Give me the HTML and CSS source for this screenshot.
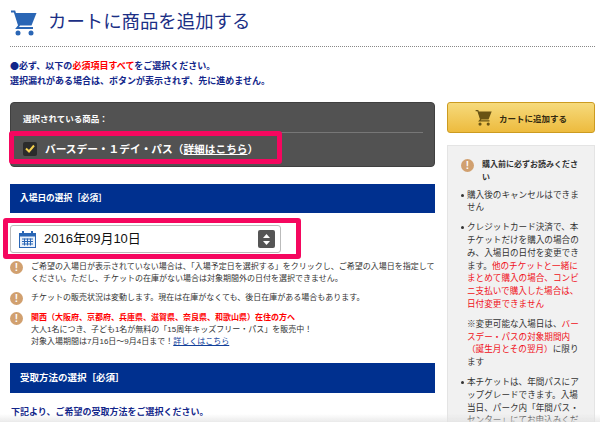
FILE: index.html
```html
<!DOCTYPE html>
<html lang="ja">
<head>
    <meta charset="UTF-8">
    <meta name="viewport" content="width=device-width, initial-scale=1.0">
    <title>カートに商品を追加する</title>
    <link rel="stylesheet" href="styles.css">
</head>
<body>
    <header class="page-head">
        <svg class="cart-icon" width="27" height="27" viewBox="0 0 27 27">
            <path d="M5 4H26.500L21.500 16.500H8.500z" fill="#2a66b5"/>
            <path d="M1 2.500H4.500L9 16.500L7 19H23" fill="none" stroke="#2a66b5" stroke-width="1.800"/>
            <circle cx="8" cy="24" r="2.500" fill="#2a66b5"/>
            <circle cx="21" cy="24" r="2.500" fill="#2a66b5"/>
        </svg>
        <h1>カートに商品を追加する</h1>
    </header>

    <p class="lead">●必ず、以下の<em>必須項目すべて</em>をご選択ください。<br>選択漏れがある場合は、ボタンが表示されず、先に進めません。</p>

    <div class="columns">
        <main class="main-col">
            <section class="selected-panel">
                <div class="selected-label">選択されている商品：</div>
                <div class="selected-item">
                    <span class="check">
                        <svg width="10" height="9" viewBox="0 0 10 9"><path d="M1 4.500l3 3 5-6" fill="none" stroke="#f2cf4e" stroke-width="2"/></svg>
                    </span>
                    <span>バースデー・１デイ・パス（<u>詳細はこちら</u>）</span>
                </div>
            </section>

            <h2 class="bar">入場日の選択［必須］</h2>

            <div class="date-frame">
                <div class="date-select">
                    <svg class="cal-icon" width="17" height="17" viewBox="0 0 17 17">
                        <rect x="0.500" y="2.500" width="16" height="14" fill="#eaf1fa" stroke="#2a66b5"/>
                        <rect x="0.500" y="2.500" width="16" height="3" fill="#2a66b5"/>
                        <rect x="3" y="0" width="2" height="4" fill="#2a66b5"/>
                        <rect x="12" y="0" width="2" height="4" fill="#2a66b5"/>
                        <path d="M3 8h11M3 10.500h11M3 13h11M5.500 7.500v7M8.500 7.500v7M11.500 7.500v7" stroke="#2a66b5" fill="none"/>
                    </svg>
                    <span class="date-text">2016年09月10日</span>
                    <span class="stepper">
                        <svg width="7" height="11" viewBox="0 0 7 11"><path d="M3.500 0L7 4H0zM3.500 11L0 7h7z" fill="#fff"/></svg>
                    </span>
                </div>
            </div>

            <div class="note">
                <span class="alert">!</span>
                <p>ご希望の入場日が表示されていない場合は、「入場予定日を選択する」をクリックし、ご希望の入場日を指定してください。ただし、チケットの在庫がない場合は対象期間外の日付を選択できません。</p>
            </div>
            <div class="note">
                <span class="alert">!</span>
                <p>チケットの販売状況は変動します。現在は在庫がなくても、後日在庫がある場合もあります。</p>
            </div>
            <div class="note">
                <span class="alert">!</span>
                <p><strong>関西（大阪府、京都府、兵庫県、滋賀県、奈良県、和歌山県）在住の方へ</strong><br>大人1名につき、子ども1名が無料の「15周年キッズフリー・パス」を販売中！<br>対象入場期間は7月16日〜9月4日まで！<a href="#">詳しくはこちら</a></p>
            </div>

            <h2 class="bar bar-second">受取方法の選択［必須］</h2>
            <p class="receive">下記より、ご希望の受取方法をご選択ください。</p>
        </main>

        <aside class="side-col">
            <button class="cart-button">
                <svg width="17" height="17" viewBox="0 0 27 27">
                    <path d="M5 4H26.500L21.500 16.500H8.500z" fill="#6a5414"/>
                    <path d="M1 2.500H4.500L9 16.500L7 19H23" fill="none" stroke="#6a5414" stroke-width="2"/>
                    <circle cx="8" cy="24" r="2.500" fill="#6a5414"/>
                    <circle cx="21" cy="24" r="2.500" fill="#6a5414"/>
                </svg>
                <span>カートに追加する</span>
            </button>
            <div class="side-box">
                <div class="side-head">
                    <span class="alert alert-big">!</span>
                    <strong>購入前に必ずお読みください</strong>
                </div>
                <ul>
                    <li>購入後のキャンセルはできません</li>
                    <li>クレジットカード決済で、本チケットだけを購入の場合のみ、入場日の日付を変更できます。<em>他のチケットと一緒にまとめて購入の場合、コンビニ支払いで購入した場合は、日付変更できません</em>
                        <p>※変更可能な入場日は、<em>バースデー・パスの対象期間内（誕生月とその翌月）</em>に限ります</p>
                    </li>
                    <li>本チケットは、年間パスにアップグレードできます。入場当日、パーク内「年間パス・センター」にてお申込みください</li>
                </ul>
            </div>
        </aside>
    </div>
    <div class="bottom-fade"></div>
</body>
</html>
```

FILE: styles.css
```css
* {
    box-sizing: border-box;
}

html, body {
    height: 422px;
    overflow: hidden;
}

body {
    margin: 0;
    padding: 0 5px 0 10px;
    background-color: #fff;
    color: #333;
    font-family: "Liberation Sans", "Noto Sans CJK JP", sans-serif;
    font-size: 8px;
    line-height: 12px;
}

em {
    font-style: normal;
    color: #f01020;
}

.page-head {
    display: flex;
    align-items: center;
    gap: 11px;
    height: 47px;
    padding-bottom: 2px;
    border-bottom: 1px dotted #888;
}

.cart-icon {
    flex: none;
}

h1 {
    margin: 0;
    color: #1b2f85;
    font-size: 18.400px;
    font-weight: normal;
}

.lead {
    margin: 11px 0 14px;
    color: #12268a;
    font-family: "Noto Sans CJK JP", sans-serif;
    font-size: 9px;
    font-weight: bold;
    line-height: 15px;
}

.lead em {
    color: #f00;
}

.columns {
    display: flex;
    gap: 12px;
    align-items: flex-start;
}

.main-col {
    flex: none;
    width: 425px;
}

.side-col {
    flex: none;
    width: 148px;
}

.selected-panel {
    height: 65px;
    padding-top: 10px;
    background-color: #525252;
    border: 1px solid #404040;
    border-radius: 4px;
    color: #fff;
}

.selected-label {
    height: 20px;
    margin: 0 11px 0 12px;
    border-bottom: 1px solid #777;
    font-size: 8.500px;
    font-weight: bold;
}

.selected-item {
    display: flex;
    align-items: center;
    gap: 8px;
    width: 273px;
    height: 33px;
    margin: -2px 0 0 -2px;
    padding: 2px 0 0 9px;
    border: 5px solid #f5075f;
    border-radius: 3px;
    font-size: 10.700px;
    font-weight: bold;
}

.check {
    display: flex;
    align-items: center;
    justify-content: center;
    width: 14px;
    height: 14px;
    background-color: #2b2b2b;
    border-radius: 2px;
}

.bar {
    height: 29px;
    margin: 17px 0 0;
    padding: 0 10px;
    background-color: #00308f;
    color: #fff;
    font-size: 8.700px;
    line-height: 29px;
}

.bar-second {
    height: 30px;
    margin-top: 15px;
    font-size: 9.500px;
    line-height: 30px;
}

.date-frame {
    width: 298px;
    height: 41px;
    margin: 5px 0 2px -7px;
    padding: 2px 15px 1px 2px;
    border: 5px solid #f5075f;
    border-radius: 3px;
}

.date-select {
    display: flex;
    align-items: center;
    height: 28px;
    padding: 0 5px 0 8px;
    background-color: #fff;
    border: 1px solid #bbb;
    border-radius: 3px;
}

.cal-icon {
    flex: none;
}

.date-text {
    margin-left: 8px;
    flex: 1;
    color: #111;
    font-size: 13px;
}

.stepper {
    display: flex;
    align-items: center;
    justify-content: center;
    width: 17px;
    height: 18px;
    background-color: #555;
    border-radius: 2px;
}

.note {
    display: flex;
    gap: 8px;
    margin-bottom: 7px;
}

.note p {
    margin: 0;
    flex: 1;
}

.note strong {
    color: #f00;
}

.note a {
    color: #12409a;
}

.alert {
    flex: none;
    width: 13px;
    height: 13px;
    background-color: #d1a06f;
    border-radius: 50%;
    color: #fff;
    font-size: 10px;
    font-weight: bold;
    line-height: 13px;
    text-align: center;
}

.receive {
    margin: 13px 0 0 1px;
    color: #12268a;
    font-size: 9px;
    font-weight: bold;
}

.cart-button {
    display: flex;
    align-items: center;
    justify-content: center;
    gap: 7px;
    width: 148px;
    height: 31px;
    padding: 0;
    background: linear-gradient(#f6da7c, #edbb3e);
    border: 1px solid #cc9b20;
    border-radius: 3px;
    color: #332a10;
    font-family: inherit;
    font-size: 8.500px;
    font-weight: bold;
}

.side-box {
    height: 280px;
    margin-top: 12px;
    padding: 13px 14px 0 13px;
    overflow: hidden;
    background-color: #f1f1f1;
    border: 1px solid #e4e4e4;
    font-size: 8.600px;
    line-height: 12.800px;
}

.side-head {
    display: flex;
    gap: 8px;
    font-size: 8px;
}

.side-box ul {
    margin: 4px 0 0;
    padding: 0 0 0 6px;
    list-style: none;
}

.side-box li {
    position: relative;
    margin-bottom: 7px;
}

.side-box li::before {
    content: "";
    position: absolute;
    left: -6px;
    top: 5px;
    width: 3px;
    height: 3px;
    background-color: #333;
    border-radius: 50%;
}

.side-box li p {
    margin: 7px 0 0;
}

/* soft grey fade along the bottom edge of the screenshot */
.bottom-fade {
    position: fixed;
    left: 0;
    right: 0;
    bottom: 0;
    height: 8px;
    background: linear-gradient(rgba(225, 225, 225, 0), rgba(225, 225, 225, 0.7));
}
```
